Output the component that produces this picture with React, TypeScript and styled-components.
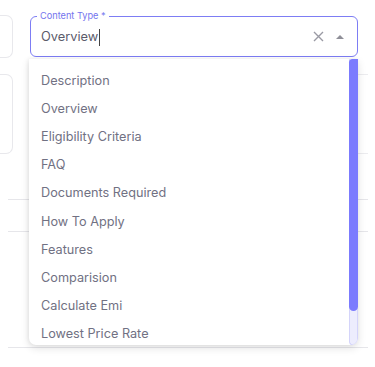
import styled, { createGlobalStyle } from 'styled-components'

const GlobalStyle = createGlobalStyle`
  body {
    margin: 0;
    background: #ffffff;
    font-family: Inter, 'Noto Sans', sans-serif;
  }
`

const options = [
  'Description',
  'Overview',
  'Eligibility Criteria',
  'FAQ',
  'Documents Required',
  'How To Apply',
  'Features',
  'Comparision',
  'Calculate Emi',
  'Lowest Price Rate',
]

const Page = styled.div`
  position: relative;
  width: 375px;
  height: 367px;
  overflow: hidden;
  display: flex;
  flex-direction: column;
`

const Row = styled.div<{ $top: number }>`
  display: flex;
  flex-direction: row;
  align-items: flex-start;
  gap: 17px;
  margin-top: ${({ $top }) => $top}px;
`

const LeftStub = styled.div<{ $height: number }>`
  width: 13px;
  height: ${({ $height }) => $height}px;
  box-sizing: border-box;
  border: 1px solid #e8e8ec;
  border-left: none;
  border-radius: 0 7px 7px 0;
`

const Field = styled.div`
  position: relative;
  width: 328px;
  height: 41px;
  margin-top: 1px;
  box-sizing: border-box;
  border: 1.5px solid #7d7df4;
  border-radius: 6px;
  display: flex;
  align-items: center;
  padding: 0 10px;
`

const FieldLabel = styled.span`
  position: absolute;
  top: -8px;
  left: 6px;
  padding: 0 3px;
  background: #ffffff;
  color: #7474ee;
  font-size: 9.2px;
  line-height: 14px;
`

const FieldValue = styled.span`
  flex: 1;
  display: flex;
  align-items: center;
  color: #5b5b6b;
  font-size: 12.8px;
  line-height: 18px;
  padding-top: 1px;
`

const Cursor = styled.span`
  display: inline-block;
  width: 1px;
  height: 17px;
  margin-left: 1px;
  background: #444;
`

const FieldIcons = styled.div`
  display: flex;
  align-items: center;
  gap: 11px;
  margin-right: 2px;
`

const BlockBand = styled.div`
  width: 338px;
  height: 80px;
  box-sizing: border-box;
  border-top: 1px solid #ececef;
  border-bottom: 1px solid #ececef;
`

const Divider = styled.div<{ $top: number }>`
  margin: ${({ $top }) => $top}px 7px 0 8px;
  height: 1px;
  background: #e6e6ea;
`

const Dropdown = styled.div`
  position: absolute;
  top: 59px;
  left: 29px;
  width: 329px;
  height: 286px;
  display: flex;
  background: #ffffff;
  border-radius: 0 0 7px 7px;
  box-shadow: 0 3px 8px rgba(0, 0, 0, 0.12), -1px 0 4px rgba(0, 0, 0, 0.06);
  overflow: hidden;
`

const OptionList = styled.ul`
  flex: 1;
  list-style: none;
  margin: 0;
  padding: 7px 0 0 0;
`

const Option = styled.li`
  height: 28.2px;
  display: flex;
  align-items: center;
  padding-left: 12px;
  color: #717183;
  font-size: 12.7px;
`

const ScrollTrack = styled.div`
  width: 9px;
  display: flex;
  flex-direction: column;
  background: #ededfd;
  border: 1px solid #d4d4fa;
  border-top: none;
  border-radius: 0 0 6px 4px;
  box-sizing: border-box;
`

const ScrollThumb = styled.div`
  height: 252px;
  margin: 0 -1px;
  background: #7b7bfe;
  border-radius: 4px 0 5px 5px;
`

const App = () => (
  <>
    <GlobalStyle />
    <Page>
      <Row $top={15}>
        <LeftStub $height={43} />
        <Field>
          <FieldLabel>Content Type *</FieldLabel>
          <FieldValue>
            Overview
            <Cursor />
          </FieldValue>
          <FieldIcons>
            <svg width="11" height="11" viewBox="0 0 11 11">
              <path d="M1 1 L10 10 M10 1 L1 10" stroke="#9a9aa4" strokeWidth="1.4" fill="none" />
            </svg>
            <svg width="10" height="6" viewBox="0 0 10 6">
              <path d="M1 5 L5 1 L9 5 Z" fill="#8f8f98" />
            </svg>
          </FieldIcons>
        </Field>
      </Row>
      <Row $top={16}>
        <LeftStub $height={80} />
        <BlockBand />
      </Row>
      <Divider $top={45} />
      <Divider $top={31} />
      <Divider $top={115} />
      <Dropdown>
        <OptionList>
          {options.map((o) => (
            <Option key={o}>{o}</Option>
          ))}
        </OptionList>
        <ScrollTrack>
          <ScrollThumb />
        </ScrollTrack>
      </Dropdown>
    </Page>
  </>
)

export default App
